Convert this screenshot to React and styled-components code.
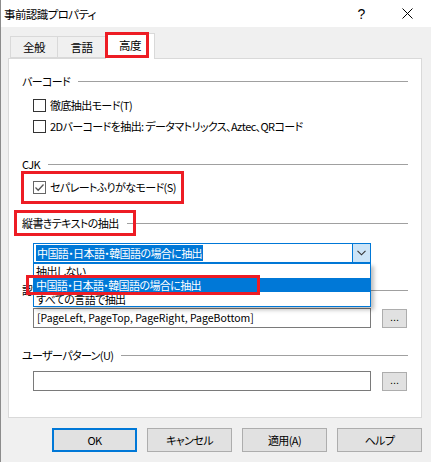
import React from 'react';
import styled, { createGlobalStyle } from 'styled-components';

const Global = createGlobalStyle`
  html, body {
    margin: 0;
    padding: 0;
    background: #f0f0f0;
  }
  body {
    font-family: "Noto Sans CJK JP", "Noto Sans", sans-serif;
    font-size: 11px;
    font-feature-settings: "palt" 1;
    font-variant-east-asian: proportional-width;
    letter-spacing: -0.6px;
    color: #000;
  }
`;

const Window = styled.div`
  width: 431px;
  height: 462px;
  box-sizing: border-box;
  border-left: 1px solid #8c8c8c;
  background: #f0f0f0;
  display: flex;
  flex-direction: column;
  overflow: hidden;
`;

const TitleBar = styled.div`
  height: 27px;
  background: #fff;
  display: flex;
  align-items: center;
  padding-left: 3px;
`;

const Title = styled.div`
  flex: 1;
  font-size: 11.5px;
  line-height: 16px;
`;

const TitleButton = styled.div`
  width: ${p => p.$w}px;
  height: 27px;
  display: flex;
  align-items: center;
  justify-content: center;
  font-family: "Liberation Sans", sans-serif;
  font-size: 14px;
`;

const Body = styled.div`
  flex: 1;
  display: flex;
  flex-direction: column;
  padding: 0 9px 0 7px;
`;

const TabStrip = styled.div`
  height: 31px;
  display: flex;
  align-items: flex-end;
  padding-left: 2px;
  position: relative;
  z-index: 1;
`;

const Tab = styled.div`
  position: relative;
  box-sizing: border-box;
  height: ${p => (p.$active ? 26 : 22)}px;
  width: ${p => (p.$active ? 50 : 48)}px;
  margin-left: ${p => (p.$active ? -1 : 0)}px;
  margin-bottom: ${p => (p.$active ? -1 : 0)}px;
  border: 1px solid #d9d9d9;
  border-bottom: ${p => (p.$active ? 'none' : '1px solid #d9d9d9')};
  border-left: ${p => (p.$first || p.$active ? '1px solid #d9d9d9' : 'none')};
  background: ${p => (p.$active ? '#fff' : '#f0f0f0')};
  display: flex;
  justify-content: center;
  padding-top: ${p => (p.$active ? 3 : 2)}px;
  font-size: 11.5px;
  line-height: 16px;
`;

const Mark = styled.div`
  position: absolute;
  box-sizing: border-box;
  border: 3px solid #ed1c24;
  pointer-events: none;
  z-index: 5;
`;

const Panel = styled.div`
  height: 360px;
  box-sizing: border-box;
  background: #fff;
  border: 1px solid #d9d9d9;
  padding: 14px 13px 0 13px;
  display: flex;
  flex-direction: column;
`;

const Header = styled.div`
  position: relative;
  height: 16px;
  margin-top: ${p => p.$mt}px;
  display: flex;
  align-items: center;
  gap: 8px;
  line-height: 16px;
  white-space: nowrap;
`;

const Rule = styled.div`
  flex: 1;
  height: 1px;
  background: #a0a0a0;
`;

const CheckRow = styled.div`
  position: relative;
  height: 16px;
  margin-top: ${p => p.$mt}px;
  margin-left: 11px;
  display: flex;
  align-items: center;
  gap: 4px;
  line-height: 16px;
  white-space: nowrap;
`;

const Box = styled.div`
  width: 13px;
  height: 13px;
  box-sizing: border-box;
  border: 1px solid ${p => (p.$checked ? '#666' : '#333')};
  background: #fff;
  display: flex;
  align-items: center;
  justify-content: center;
`;

const Combo = styled.div`
  position: relative;
  margin-top: ${p => p.$mt}px;
  margin-left: 11px;
  width: 338px;
  height: 20px;
  box-sizing: border-box;
  border: 1px solid #0078d7;
  background: #fff;
  display: flex;
  align-items: center;
  z-index: 3;
`;

const ComboText = styled.div`
  flex: 1;
  padding-left: 2px;
  display: flex;
  align-items: center;
`;

const Selected = styled.span`
  background: #0078d7;
  color: #fff;
  line-height: 16px;
  padding: 0 1px;
`;

const ComboButton = styled.div`
  width: 17px;
  height: 18px;
  background: #cce4f7;
  border-left: 1px solid #0078d7;
  display: flex;
  align-items: center;
  justify-content: center;
`;

const List = styled.div`
  position: absolute;
  left: -1px;
  top: 19px;
  width: 338px;
  box-sizing: border-box;
  border: 1px solid #0078d7;
  background: #fff;
  box-shadow: 3px 3px 4px rgba(0, 0, 0, 0.25);
`;

const Option = styled.div`
  position: relative;
  height: 14px;
  line-height: 14px;
  padding-left: 2px;
  background: ${p => (p.$hi ? '#0078d7' : '#fff')};
  color: ${p => (p.$hi ? '#fff' : '#000')};
  white-space: nowrap;
`;

const FieldRow = styled.div`
  margin-top: ${p => p.$mt}px;
  margin-left: 11px;
  display: flex;
  align-items: center;
  gap: 11px;
`;

const Field = styled.div`
  width: 338px;
  height: 20px;
  box-sizing: border-box;
  border: 1px solid #7a7a7a;
  background: #fff;
  padding-left: 3px;
  line-height: 18px;
  white-space: nowrap;
  font-size: 10.5px;
  letter-spacing: 0;
`;

const SmallButton = styled.div`
  width: 25px;
  height: 19px;
  box-sizing: border-box;
  border: 1px solid #adadad;
  background: #e1e1e1;
  display: flex;
  align-items: center;
  justify-content: center;
  font-family: "Liberation Sans", sans-serif;
  font-size: 11px;
  letter-spacing: 0;
  padding-bottom: 3px;
`;

const Footer = styled.div`
  margin-top: 10px;
  display: flex;
  justify-content: flex-end;
  gap: 10px;
`;

const Button = styled.div`
  width: 85px;
  height: 24px;
  box-sizing: border-box;
  border: ${p => (p.$default ? '2px solid #0078d7' : '1px solid #adadad')};
  background: #e1e1e1;
  display: flex;
  align-items: center;
  justify-content: center;
  line-height: 16px;
`;

const Check = () => (
  <svg width="11" height="11" viewBox="0 0 11 11">
    <path d="M1.5 5.5 L4.2 8.2 L9.5 2.5" fill="none" stroke="#555" strokeWidth="1.3" />
  </svg>
);

const Chevron = () => (
  <svg width="9" height="6" viewBox="0 0 9 6">
    <path d="M0.5 0.8 L4.5 4.8 L8.5 0.8" fill="none" stroke="#333" strokeWidth="1.1" />
  </svg>
);

const Close = () => (
  <svg width="11" height="11" viewBox="0 0 11 11">
    <path d="M0.5 0.5 L10.5 10.5 M10.5 0.5 L0.5 10.5" stroke="#000" strokeWidth="1" />
  </svg>
);

export default function App() {
  return (
    <>
      <Global />
      <Window>
        <TitleBar>
          <Title>事前認識プロパティ</Title>
          <TitleButton $w={44}>?</TitleButton>
          <TitleButton $w={48}>
            <Close />
          </TitleButton>
        </TitleBar>
        <Body>
          <TabStrip>
            <Tab $first>全般</Tab>
            <Tab>言語</Tab>
            <Tab $active>
              高度
              <Mark style={{ left: -1, top: -2, width: 44, height: 26 }} />
            </Tab>
          </TabStrip>
          <Panel>
            <Header $mt={0}>
              バーコード
              <Rule />
            </Header>
            <CheckRow $mt={8}>
              <Box />
              徹底抽出モード(T)
            </CheckRow>
            <CheckRow $mt={5}>
              <Box />
              2Dバーコードを抽出: データマトリックス、Aztec、QRコード
            </CheckRow>
            <Header $mt={22}>
              CJK
              <Rule />
            </Header>
            <CheckRow $mt={7}>
              <Box $checked>
                <Check />
              </Box>
              セパレートふりがなモード(S)
              <Mark style={{ left: -12, top: -8, width: 163, height: 33 }} />
            </CheckRow>
            <Header $mt={20}>
              縦書きテキストの抽出
              <Rule />
              <Mark style={{ left: -8, top: -5, width: 122, height: 26 }} />
            </Header>
            <Combo $mt={12}>
              <ComboText>
                <Selected>中国語・日本語・韓国語の場合に抽出</Selected>
              </ComboText>
              <ComboButton>
                <Chevron />
              </ComboButton>
              <List>
                <Option>抽出しない</Option>
                <Option $hi>
                  中国語・日本語・韓国語の場合に抽出
                  <Mark style={{ left: -8, top: -3, width: 234, height: 20 }} />
                </Option>
                <Option>すべての言語で抽出</Option>
              </List>
            </Combo>
            <Header $mt={19}>
              認識領域(R)
              <Rule />
            </Header>
            <FieldRow $mt={10}>
              <Field>[PageLeft, PageTop, PageRight, PageBottom]</Field>
              <SmallButton>...</SmallButton>
            </FieldRow>
            <Header $mt={19}>
              ユーザーパターン(U)
              <Rule />
            </Header>
            <FieldRow $mt={8}>
              <Field />
              <SmallButton>...</SmallButton>
            </FieldRow>
          </Panel>
          <Footer>
            <Button $default>OK</Button>
            <Button>キャンセル</Button>
            <Button>適用(A)</Button>
            <Button>ヘルプ</Button>
          </Footer>
        </Body>
      </Window>
    </>
  );
}
